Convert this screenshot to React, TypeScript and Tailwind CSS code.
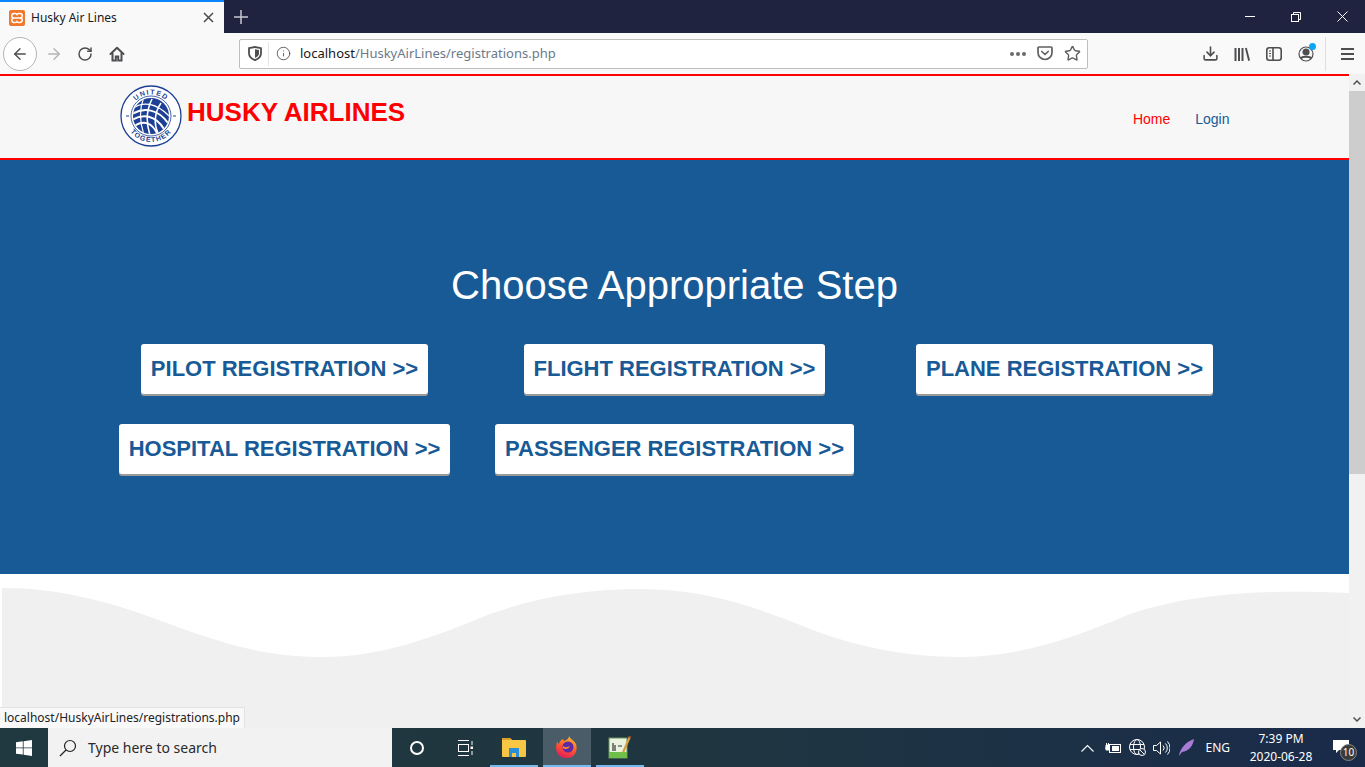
import { ArrowLeft, ArrowRight, Download, Info, RotateCw, Star } from "lucide-react"

const sans = "font-['Liberation_Sans',Arial,sans-serif]"
const ui = "font-['Noto_Sans',sans-serif]"

const steps = [
  "PILOT REGISTRATION >>",
  "FLIGHT REGISTRATION >>",
  "PLANE REGISTRATION >>",
  "HOSPITAL REGISTRATION >>",
  "PASSENGER REGISTRATION >>",
]

function XamppIcon() {
  return (
    <svg width="16" height="16" viewBox="0 0 16 16">
      <rect width="16" height="16" rx="2" fill="#f0782d" />
      <path d="M5 3.5h1.5a2 2 0 0 1 1.5 1l.0 0a2 2 0 0 1 1.5-1H11a1.5 1.5 0 0 1 0 4.5H5a1.5 1.5 0 0 1 0-4.5ZM5 8h6a1.5 1.5 0 0 1 0 4.5H9.5A2 2 0 0 1 8 11.5a2 2 0 0 1-1.500 1H5A1.500 1.500 0 0 1 5 8Z" fill="none" stroke="#fff" strokeWidth="1.500" />
    </svg>
  )
}

function HomeIcon() {
  return (
    <svg width="16" height="16" viewBox="0 0 16 16" fill="none" stroke="#4e4e50" strokeWidth="2">
      <path d="M1.500 8 8 1.800 14.500 8" strokeLinejoin="round" strokeLinecap="round" />
      <path d="M3.500 7v7.500h3.300V10.500h2.400v4h3.300V7" />
    </svg>
  )
}

function ShieldIcon() {
  return (
    <svg width="14" height="15" viewBox="0 0 14 15">
      <path d="M1 2.200 7 1l6 1.200v5c0 3-2.500 5.500-6 7-3.500-1.500-6-4-6-7Z" fill="none" stroke="#4e4e50" strokeWidth="1.800" />
      <path d="M7 3.200 11 4v3.200c0 2-1.500 3.600-4 4.800Z" fill="#4e4e50" />
    </svg>
  )
}

function PocketIcon() {
  return (
    <svg width="16" height="15" viewBox="0 0 16 15" fill="none" stroke="#5f5f61" strokeWidth="1.700">
      <path d="M1 2a1 1 0 0 1 1-1h12a1 1 0 0 1 1 1v4.500a7 7 0 0 1-14 0Z" />
      <path d="m4.800 5.500 3.200 3 3.200-3" strokeLinecap="round" strokeLinejoin="round" />
    </svg>
  )
}

function LibraryIcon() {
  return (
    <svg width="16" height="14" viewBox="0 0 16 14" fill="#4e4e50">
      <rect x="0.500" y="1" width="2" height="13" />
      <rect x="4" y="1" width="2" height="13" />
      <rect x="7.500" y="1" width="2" height="13" />
      <path d="m11 1.300 1.800-.6 3.200 12.600-1.800.6Z" />
    </svg>
  )
}

function SidebarIcon() {
  return (
    <svg width="16" height="14" viewBox="0 0 16 14" fill="none" stroke="#4e4e50" strokeWidth="1.600">
      <rect x="0.800" y="0.800" width="14.400" height="12.400" rx="2.500" />
      <path d="M7 1v12" />
      <path d="M3 4h2M3 6.500h2M3 9h2" strokeWidth="1.200" />
    </svg>
  )
}

function AccountIcon() {
  return (
    <div className="relative h-4 w-4">
      <svg width="16" height="16" viewBox="0 0 16 16" fill="none" stroke="#4e4e50" strokeWidth="1.200">
        <circle cx="8" cy="8" r="7" />
        <circle cx="8" cy="6" r="3" fill="#4e4e50" />
        <path d="M2.800 12.500C4 10 12 10 13.200 12.500" strokeWidth="2" />
      </svg>
      <span className="absolute -right-[2px] -top-[3px] h-[7px] w-[7px] rounded-full bg-[#0fa5f5]" />
    </div>
  )
}

function HamburgerIcon() {
  return (
    <svg width="13" height="12" viewBox="0 0 13 12" fill="#4e4e50">
      <rect width="13" height="2" />
      <rect y="5" width="13" height="2" />
      <rect y="10" width="13" height="2" />
    </svg>
  )
}

function WindowButtons() {
  return (
    <div className="flex h-full items-center">
      <div className="flex w-[46px] justify-center">
        <div className="h-px w-[10px] bg-white" />
      </div>
      <div className="flex w-[46px] justify-center">
        <svg width="10" height="10" viewBox="0 0 10 10" fill="none" stroke="#fff">
          <rect x="0.500" y="2.500" width="7" height="7" />
          <path d="M2.500 2.500v-2h7v7h-2" />
        </svg>
      </div>
      <div className="flex w-[46px] justify-center">
        <svg width="11" height="11" viewBox="0 0 11 11" stroke="#fff">
          <path d="m.5.500 10 10M10.500.500l-10 10" />
        </svg>
      </div>
    </div>
  )
}

function BrowserChrome() {
  return (
    <div className="shrink-0">
      <div className={`flex h-[33px] items-stretch bg-[#202340] ${ui}`}>
        <div className="flex w-[224px] items-center border-t-2 border-[#0a84ff] bg-[#f9f9fa] pl-[9px] pr-[10px]">
          <XamppIcon />
          <span className="ml-[6px] flex-1 text-[12px] text-[#18181a]">Husky Air Lines</span>
          <svg width="11" height="11" viewBox="0 0 11 11" stroke="#4a4a4f" strokeWidth="1.500">
            <path d="m1 1 9 9M10 1l-9 9" />
          </svg>
        </div>
        <div className="flex w-[34px] items-center justify-center">
          <svg width="14" height="14" viewBox="0 0 14 14" stroke="#c8c9d2" strokeWidth="1.500">
            <path d="M7 0v14M0 7h14" />
          </svg>
        </div>
        <div className="flex-1" />
        <WindowButtons />
      </div>

      <div className="flex h-[41px] items-center bg-[#f9f9fa]">
        <div className="ml-[3px] flex h-[34px] w-[34px] items-center justify-center rounded-full border border-[#b5b5b6] bg-white">
          <ArrowLeft size={18} strokeWidth={1.800} color="#4e4e50" />
        </div>
        <ArrowRight size={18} strokeWidth={1.800} color="#b4b4b5" className="ml-[8px]" />
        <RotateCw size={16} strokeWidth={2.200} color="#4e4e50" className="ml-[14px]" />
        <div className="ml-[16px]">
          <HomeIcon />
        </div>
        <div className={`ml-[114px] flex h-[30px] w-[849px] items-center rounded-[2px] border border-[#bebebe] bg-white pl-[8px] pr-[6px] ${ui}`}>
          <ShieldIcon />
          <div className="ml-[6px] h-[24px] w-px bg-[#e4e4e5]" />
          <Info size={15} strokeWidth={1.500} color="#5b5b5d" className="ml-[7px]" />
          <span className="ml-[9px] flex-1 text-[13px] text-[#6b7a8a]">
            <span className="text-[#18181a]">localhost</span>/HuskyAirLines/registrations.php
          </span>
          <div className="flex gap-[2px]">
            <span className="h-[4px] w-[4px] rounded-full bg-[#6a6a6c]" />
            <span className="h-[4px] w-[4px] rounded-full bg-[#6a6a6c]" />
            <span className="h-[4px] w-[4px] rounded-full bg-[#6a6a6c]" />
          </div>
          <div className="ml-[11px]">
            <PocketIcon />
          </div>
          <Star size={17} strokeWidth={2} color="#5f5f61" className="ml-[11px]" />
        </div>
        <div className="ml-[114px] flex items-center">
          <Download size={17} strokeWidth={2.200} color="#4e4e50" />
        </div>
        <div className="ml-[15px]">
          <LibraryIcon />
        </div>
        <div className="ml-[16px]">
          <SidebarIcon />
        </div>
        <div className="ml-[16px]">
          <AccountIcon />
        </div>
        <div className="ml-[11px] h-[34px] w-px bg-[#dededf]" />
        <div className="ml-[15px]">
          <HamburgerIcon />
        </div>
      </div>
    </div>
  )
}

function Logo() {
  return (
    <svg width="62" height="62" viewBox="0 0 62 62" className="shrink-0">
      <defs>
        <path id="logoTop" d="M9.500 31a21.500 21.500 0 0 1 43 0" />
        <path id="logoBottom" d="M5 31a26 26 0 0 0 52 0" />
        <clipPath id="logoGlobe">
          <circle cx="31" cy="31" r="18" />
        </clipPath>
      </defs>
      <circle cx="31" cy="31" r="30" fill="#fff" stroke="#1d3f94" strokeWidth="1.300" />
      <circle cx="31" cy="31" r="20" fill="#fff" stroke="#1d3f94" strokeWidth="0.800" />
      <circle cx="31" cy="31" r="18" fill="#1d3f94" />
      <g clipPath="url(#logoGlobe)" fill="none" stroke="#fff">
        <path d="M12 24C22 16 36 17 50 32" strokeWidth="1.200" />
        <path d="M12 29C24 22 38 24 48 38" strokeWidth="2" />
        <path d="M12 35C24 28 36 31 44 44" strokeWidth="2" />
        <path d="M14 41C24 35 32 37 38 50" strokeWidth="2" />
        <path d="M24 12C19 24 20 38 24 50" strokeWidth="1.200" />
        <path d="M32 14C26 26 26 38 30 50" strokeWidth="1.600" />
        <path d="M41 18C34 28 34 40 38 48" strokeWidth="1.600" />
      </g>
      <text className={sans} fontSize="7" fontWeight="700" fill="#1d3f94" letterSpacing="1.300">
        <textPath href="#logoTop" startOffset="50%" textAnchor="middle">UNITED</textPath>
      </text>
      <text className={sans} fontSize="7" fontWeight="700" fill="#1d3f94" letterSpacing="1.100">
        <textPath href="#logoBottom" startOffset="50%" textAnchor="middle">TOGETHER</textPath>
      </text>
      <path d="M6 31h3M53 31h3" stroke="#1d3f94" strokeWidth="1" />
    </svg>
  )
}

function SiteHeader() {
  return (
    <header className={`flex h-[86px] shrink-0 border-y-2 border-[#ff0000] bg-[#f7f7f7] ${sans}`}>
      <div className="mx-auto flex w-[1170px] items-start pl-[30.500px] pr-[30px] pt-[9px]">
        <Logo />
        <span className="ml-[5px] mt-[11px] text-[26px] font-bold leading-[32px] text-[#ff0000]">HUSKY AIRLINES</span>
        <nav className="ml-auto mt-[24px] flex gap-[25px] text-[14px] leading-[20px]">
          <a className="text-[#ff0000]">Home</a>
          <a className="text-[#185a96]">Login</a>
        </nav>
      </div>
    </header>
  )
}

function Hero() {
  return (
    <section className={`h-[414px] shrink-0 bg-[#185a96] pt-[100px] ${sans}`}>
      <h1 className="text-center text-[40px] font-normal leading-[50px] text-white">Choose Appropriate Step</h1>
      <div className="mx-auto mt-[34px] grid w-[1170px] grid-cols-3 gap-y-[30px]">
        {steps.map((step) => (
          <div key={step} className="flex justify-center">
            <a className="flex h-[50px] items-center rounded-[3px] bg-white px-[10px] pb-[2px] text-[22px] font-bold text-[#185a96] shadow-[0_2px_0_#9a9a9a]">
              {step}
            </a>
          </div>
        ))}
      </div>
    </section>
  )
}

function Wave() {
  return (
    <svg viewBox="0 0 1349 154" preserveAspectRatio="none" className="block h-[154px] w-full bg-white">
      <path
        d="M2 14C60 14 110 27 175 52C230 72 270 83 322 83C380 83 430 65 490 40C540 22 590 15 640 15C700 15 750 30 810 55C860 74 910 83 958 83C1020 83 1070 65 1130 40C1190 20 1260 15 1349 19V154H2Z"
        fill="#f0f0f0"
      />
    </svg>
  )
}

function Scrollbar() {
  return (
    <div className="flex w-[16px] shrink-0 flex-col bg-[#f1f1f1]">
      <div className="flex h-[17px] items-center justify-center">
        <svg width="8" height="5" viewBox="0 0 8 5" fill="none" stroke="#505050" strokeWidth="1.500">
          <path d="m.5 4.500 3.500-3.500 3.500 3.500" />
        </svg>
      </div>
      <div className="h-[383px] bg-[#cdcdcd]" />
      <div className="flex-1" />
      <div className="flex h-[17px] items-center justify-center">
        <svg width="8" height="5" viewBox="0 0 8 5" fill="none" stroke="#505050" strokeWidth="1.500">
          <path d="m.5.500 3.500 3.500 3.500-3.500" />
        </svg>
      </div>
    </div>
  )
}

function WindowsLogo() {
  return (
    <svg width="16" height="16" viewBox="0 0 16 16" fill="#fff">
      <path d="m0 2.300 6.800-1v6.200H0ZM7.600 1.200 16 0v7.500H7.600ZM0 8.300h6.800v6.300L0 13.700ZM7.600 8.300H16V16l-8.400-1.200Z" />
    </svg>
  )
}

function FolderIcon() {
  return (
    <svg width="24" height="20" viewBox="0 0 24 20">
      <path d="M0 2a1 1 0 0 1 1-1h7l2 2h13a1 1 0 0 1 1 1v15a1 1 0 0 1-1 1H1a1 1 0 0 1-1-1Z" fill="#f6c644" />
      <path d="M0 1h8l2 2H0Z" fill="#d9a127" />
      <path d="M7 11h10v9h-3v-4h-4v4H7Z" fill="#2a8fd6" />
    </svg>
  )
}

function FirefoxIcon() {
  return (
    <svg width="24" height="24" viewBox="0 0 24 24">
      <defs>
        <linearGradient id="foxBody" x1="0.700" y1="0" x2="0.300" y2="1">
          <stop offset="0" stopColor="#ffbd2e" />
          <stop offset="0.500" stopColor="#ff5a2b" />
          <stop offset="1" stopColor="#e3185f" />
        </linearGradient>
      </defs>
      <path d="M14 1c1 3 5 4 7 8 2 6-1 14-9 14S1 18 1 12c0-2 .5-4 1.500-6 0 1.500.5 2.500 1.500 3 .5-2.500 2-4 4-5 0 1 .5 1.500 1.500 2C11 5 14 4 14 1Z" fill="url(#foxBody)" />
      <circle cx="13" cy="12" r="5.500" fill="#5a2ba5" />
      <path d="M8 11c2 2 5 1 7 0-1 3-5 4-7 2Z" fill="#ff8a2b" />
    </svg>
  )
}

function NotepadIcon() {
  return (
    <svg width="24" height="24" viewBox="0 0 24 24">
      <rect x="1" y="3" width="18" height="20" fill="#e9f3df" stroke="#6a8f5a" />
      <rect x="1" y="17" width="18" height="6" fill="#6fc04a" />
      <path d="M5 8v8M7 10v6M10 11h4" stroke="#333" strokeWidth="1.200" />
      <path d="m14 17 7-16 2 1-7 16Z" fill="#d9a13a" />
      <path d="M21 1l2 1-.6 1.300-2-1Z" fill="#c0392b" />
    </svg>
  )
}

function TaskbarApp({ active, children }: { active?: boolean; children: React.ReactNode }) {
  return (
    <div className={`flex h-full w-[48px] items-center justify-center border-b-2 border-[#76b9ed] ${active ? "bg-[#4a5c68]" : ""}`}>
      {children}
    </div>
  )
}

function Taskbar() {
  return (
    <footer className={`flex h-[39px] shrink-0 items-center bg-gradient-to-r from-[#20383f] via-[#1f3640] to-[#1a2b4a] ${ui}`}>
      <div className="flex w-[48px] justify-center">
        <WindowsLogo />
      </div>
      <div className="flex h-full w-[344px] items-center bg-[#f2f2f2] pl-[11px]">
        <svg width="18" height="18" viewBox="0 0 18 18" fill="none" stroke="#222" strokeWidth="1.200">
          <circle cx="11" cy="7" r="5.500" />
          <path d="M7 11 1 17" />
        </svg>
        <span className="ml-[11px] text-[14px] text-[#2a2a2a]">Type here to search</span>
      </div>
      <div className="flex w-[49px] justify-center">
        <div className="h-[14px] w-[14px] rounded-full border-2 border-white" />
      </div>
      <div className="flex w-[47px] justify-center">
        <svg width="16" height="16" viewBox="0 0 16 16" fill="none" stroke="#fff">
          <path d="M1 .5h11M1 15.500h11" />
          <rect x="1.500" y="4.500" width="10" height="7" />
          <path d="M15 1v4M15 11v4" />
          <rect x="13.500" y="6.500" width="2.500" height="2.500" fill="#fff" stroke="none" />
        </svg>
      </div>
      <div className="flex h-full items-center gap-[5px] pl-[2px]">
        <TaskbarApp>
          <FolderIcon />
        </TaskbarApp>
        <TaskbarApp active>
          <FirefoxIcon />
        </TaskbarApp>
        <TaskbarApp>
          <NotepadIcon />
        </TaskbarApp>
      </div>

      <div className="ml-auto flex h-full items-center text-white">
        <svg width="13" height="8" viewBox="0 0 13 8" fill="none" stroke="#fff" strokeWidth="1.100">
          <path d="m.5 7.500 6-6 6 6" />
        </svg>
        <svg width="16" height="12" viewBox="0 0 16 12" className="ml-[11px]">
          <rect x="4.500" y="2.500" width="11" height="8" fill="none" stroke="#fff" />
          <rect x="7" y="4" width="7" height="5" fill="#fff" />
          <path d="M0 6h5M1 3h3v5H1ZM1.500 1v2M3.500 1v2" stroke="#fff" fill="#fff" />
        </svg>
        <svg width="17" height="17" viewBox="0 0 17 17" fill="none" stroke="#fff" className="ml-[8px]">
          <circle cx="8" cy="8" r="7.500" />
          <ellipse cx="8" cy="8" rx="3.500" ry="7.500" />
          <path d="M1 5.500h14M1 10.500h14" />
          <circle cx="13" cy="13" r="3.500" fill="#1c2e48" />
          <path d="m10.800 10.800 4.400 4.400" />
        </svg>
        <svg width="17" height="14" viewBox="0 0 17 14" fill="none" stroke="#fff" className="ml-[7px]">
          <path d="M.5 4.500h3l4-3.500v12l-4-3.500h-3Z" />
          <path d="M10 4.500a3.500 3.500 0 0 1 0 5M12.500 2.500a6.500 6.500 0 0 1 0 9M14.500.5a9.500 9.500 0 0 1 0 13" />
        </svg>
        <svg width="15" height="17" viewBox="0 0 15 17" className="ml-[9px]">
          <path d="M0 17C1 9 7 3 15 0c-1 7-5 12-12 13Z" fill="#a77bd6" />
        </svg>
        <span className="ml-[11px] text-[12px]">ENG</span>
        <div className="ml-[13px] flex w-[76px] flex-col items-center text-[12px] leading-[18px]">
          <span>7:39 PM</span>
          <span>2020-06-28</span>
        </div>
        <div className="relative ml-[14px] mr-[12px] h-[22px] w-[20px]">
          <svg width="16" height="13" viewBox="0 0 16 13" fill="#fff" className="absolute left-0 top-[3px]">
            <path d="M0 0h16v10H6l-3 3v-3H0Z" />
          </svg>
          <span className="absolute left-[7px] top-[7px] flex h-[17px] w-[17px] items-center justify-center rounded-full border border-[#888] bg-[#3a3a3a] text-[10px] leading-none text-white">
            10
          </span>
        </div>
      </div>
    </footer>
  )
}

export default function App() {
  return (
    <div className="flex h-screen flex-col overflow-hidden">
      <BrowserChrome />
      <div className="relative flex min-h-0 flex-1">
        <main className="min-w-0 flex-1 overflow-hidden">
          <SiteHeader />
          <Hero />
          <Wave />
        </main>
        <Scrollbar />
        <div className={`absolute bottom-0 left-0 border-r border-t border-[#e2e2e2] bg-[#f9f9fa] px-[4px] py-[2px] text-[12px] leading-[16px] text-[#222] ${ui}`}>
          localhost/HuskyAirLines/registrations.php
        </div>
      </div>
      <Taskbar />
    </div>
  )
}
